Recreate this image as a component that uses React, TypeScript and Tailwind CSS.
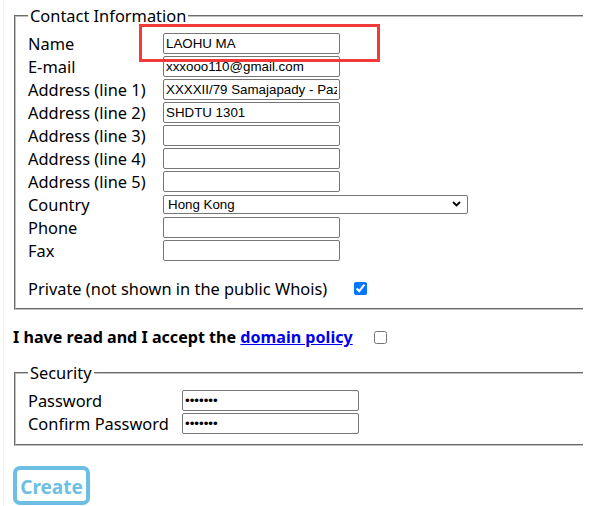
import React from "react";

const inputCls =
  "w-[177px] h-[21px] border border-[#767676] rounded-[2px] px-[2px] py-0 text-[13.33px] leading-[15px] text-black outline-none bg-white";

function Row({ label, children }: { label: string; children: React.ReactNode }) {
  return (
    <div className="flex items-center h-[23px]">
      <div className="w-[135px] shrink-0 leading-[21px]">{label}</div>
      {children}
    </div>
  );
}

function TextInput({ value = "", fill = false }: { value?: string; fill?: boolean }) {
  return (
    <input
      type="text"
      readOnly
      defaultValue={value}
      className={`${inputCls} ${fill ? "bg-[#e8f0fe]" : ""}`}
      style={{ fontFamily: '"Liberation Sans", Arial, sans-serif' }}
    />
  );
}

export default function App() {
  return (
    <div
      className="relative w-[590px] h-[506px] bg-white overflow-hidden text-black text-[16.4px]"
      style={{ fontFamily: '"Noto Sans", "Open Sans", sans-serif' }}
    >
      <div className="ml-[3px] w-[580px] h-[506px] border-l border-[#efefef] overflow-hidden">
        <div className="pl-[10px] pt-[5px] w-[700px]">
          {/* Contact Information */}
          <fieldset className="w-[640px] border-2 border-[#c0c0c0] [border-style:groove] px-[12px] pt-[6px] pb-[9px] mx-0">
            <legend className="px-[2px] leading-[21px]">Contact Information</legend>
            <Row label="Name">
              <TextInput value="LAOHU MA" />
            </Row>
            <Row label="E-mail">
              <TextInput value="xxxooo110@gmail.com" />
            </Row>
            <Row label="Address (line 1)">
              <TextInput value="XXXXII/79 Samajapady - Pazhayangadi" fill />
            </Row>
            <Row label="Address (line 2)">
              <TextInput value="SHDTU 1301" fill />
            </Row>
            <Row label="Address (line 3)">
              <TextInput />
            </Row>
            <Row label="Address (line 4)">
              <TextInput />
            </Row>
            <Row label="Address (line 5)">
              <TextInput />
            </Row>
            <Row label="Country">
              <div className="relative w-[305px] h-[19px]">
                <div
                  className="w-full h-full border border-[#767676] rounded-[2px] pl-[4px] text-[13.33px] leading-[17px] bg-white"
                  style={{ fontFamily: '"Liberation Sans", Arial, sans-serif' }}
                >
                  Hong Kong
                </div>
                <svg
                  className="absolute right-[7px] top-[6px]"
                  width="9"
                  height="6"
                  viewBox="0 0 9 6"
                >
                  <path d="M1 1 L4.5 4.5 L8 1" fill="none" stroke="#000" strokeWidth="1.8" />
                </svg>
              </div>
            </Row>
            <Row label="Phone">
              <TextInput />
            </Row>
            <Row label="Fax">
              <TextInput />
            </Row>
            <div className="flex items-center h-[21px] mt-[16px]">
              <span className="w-[326px] shrink-0 leading-[21px]">
                Private (not shown in the public Whois)
              </span>
              <input type="checkbox" defaultChecked className="w-[13px] h-[13px] m-0" />
            </div>
          </fieldset>
        </div>

        {/* Policy */}
        <div className="flex items-center h-[21px] mt-[17px] pl-[9px]">
          <span className="w-[361px] shrink-0 font-bold leading-[21px] text-[16.1px]">
            I have read and I accept the{" "}
            <a href="#" className="text-[#0000ee] underline">
              domain policy
            </a>
          </span>
          <input type="checkbox" className="w-[13px] h-[13px] m-0" />
        </div>

        {/* Security */}
        <div className="pl-[10px] mt-[14px] w-[700px]">
          <fieldset className="w-[640px] border-2 border-[#c0c0c0] [border-style:groove] px-[12px] pt-[6px] pb-[9px] mx-0">
            <legend className="px-[2px] leading-[21px]">Security</legend>
            <div className="flex items-center h-[23px]">
              <div className="w-[154px] shrink-0 leading-[21px]">Password</div>
              <input
                type="password"
                readOnly
                defaultValue="1234567"
                className={inputCls}
                style={{ fontFamily: '"Liberation Sans", Arial, sans-serif' }}
              />
            </div>
            <div className="flex items-center h-[23px]">
              <div className="w-[154px] shrink-0 leading-[21px]">Confirm Password</div>
              <input
                type="password"
                readOnly
                defaultValue="1234567"
                className={inputCls}
                style={{ fontFamily: '"Liberation Sans", Arial, sans-serif' }}
              />
            </div>
          </fieldset>
        </div>

        {/* Create */}
        <div className="pl-[9px] mt-[20px]">
          <button className="w-[77px] h-[39px] border-4 border-[#6cbfe2] rounded-[7px] bg-white text-[#6cbfe2] font-bold text-[19px] leading-none pt-[3px] flex items-center justify-center">
            Create
          </button>
        </div>
      </div>

      {/* red highlight box */}
      <div className="absolute left-[139px] top-[24px] w-[241px] h-[38px] border-[3px] border-[#f23a3a]" />
    </div>
  );
}
